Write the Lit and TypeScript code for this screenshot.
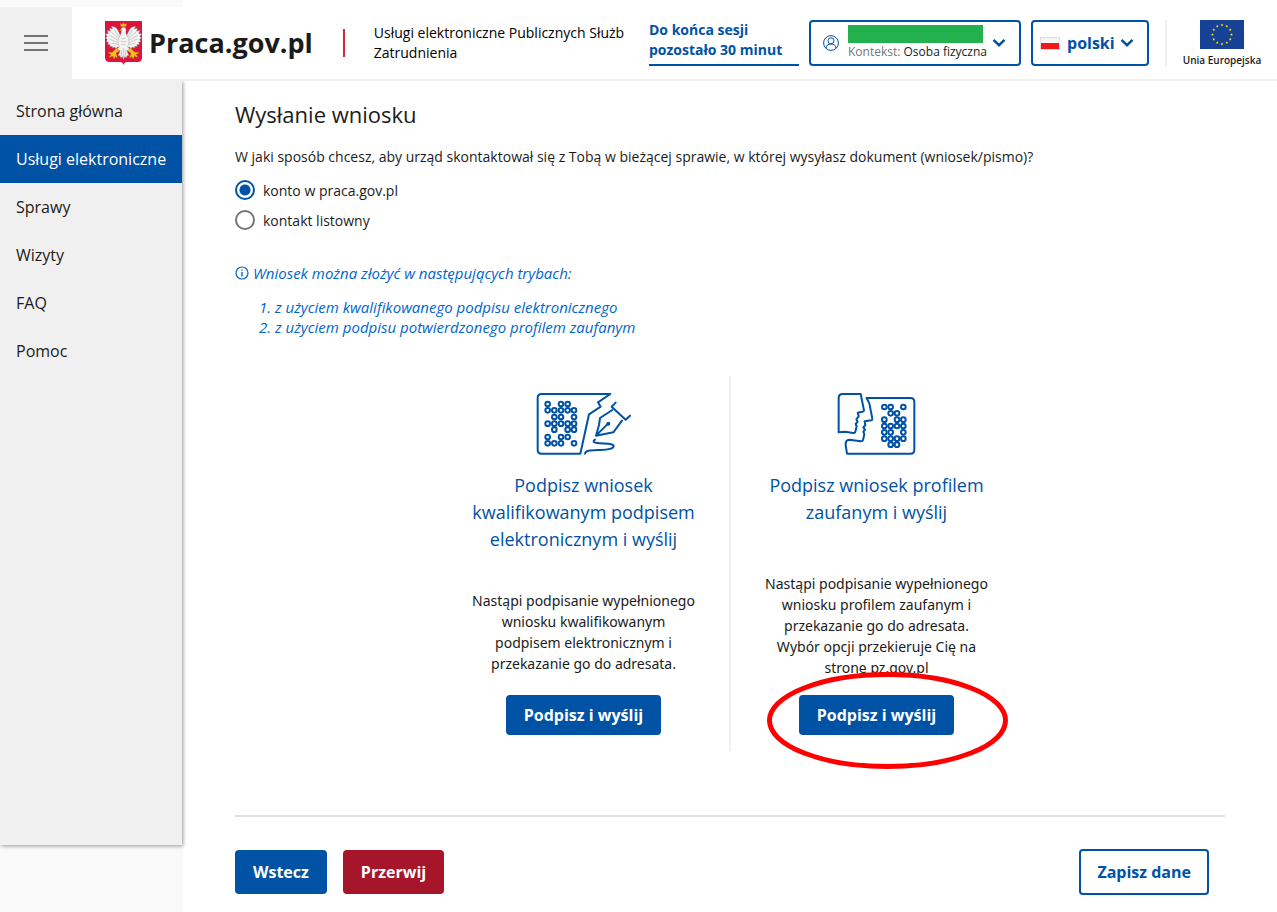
import { LitElement, html, svg, css } from "lit";
import { customElement, state } from "lit/decorators.js";

type Dot = [number, number[]];

const penDots: Dot[] = [
  [72, [68, 108, 128]],
  [91, [68, 88, 108, 128, 147]],
  [111, [88, 108, 147]],
  [131, [68, 88, 108, 128, 147]],
  [149, [88, 128, 147]],
  [171, [68, 108, 128]],
  [190, [68, 88, 108, 147]],
];

const profileDots: Dot[] = [
  [81, [178, 197, 235]],
  [100, [197, 216]],
  [119, [178, 216, 235]],
  [138, [178, 197, 216, 235]],
  [157, [178, 197, 235]],
  [176, [178, 197, 216, 235]],
  [194, [197, 216]],
];

const dots = (rows: Dot[]) =>
  rows.map(([y, xs]) => xs.map((x) => svg`<circle cx=${x} cy=${y} r="7"></circle>`));

const chevron = html`<svg class="chevron" viewBox="0 0 14 10" aria-hidden="true">
  <path d="M1.5 1.8 7 7.2l5.500-5.400" fill="none" stroke="currentColor" stroke-width="2.400"></path>
</svg>`;

const starPoints = (cx: number, cy: number, r: number) =>
  Array.from({ length: 10 }, (_, i) => {
    const a = (Math.PI / 5) * i - Math.PI / 2;
    const d = i % 2 ? r * 0.4 : r;
    return `${(cx + d * Math.cos(a)).toFixed(2)},${(cy + d * Math.sin(a)).toFixed(2)}`;
  }).join(" ");

const euStars = Array.from({ length: 12 }, (_, i) => {
  const a = (Math.PI / 6) * i;
  return svg`<polygon points=${starPoints(22 + 9.5 * Math.cos(a), 14.5 + 9.5 * Math.sin(a), 1.6)}></polygon>`;
});

const eagle = html`<svg class="eagle" viewBox="0 0 37 44" aria-hidden="true">
  <path fill="#dc143c" d="M0 0h37v36.500c0 3-2 4.500-4.500 4.500H22c-2 0-3 1-3.500 3-.5-2-1.500-3-3.500-3H4.500C2 41 0 39.500 0 36.500z"></path>
  <g fill="#f4f4f4" stroke="#8d8d8d" stroke-width=".4" stroke-linejoin="round">
    <path d="M16 16 13 9.500C11.500 6.500 9 5 6.500 5.500l1 2.500-3-.8.8 2.800-3.300-.5 1.300 3-3 .5 2 2.500-2 1.200 2.200 2-1.500 1.500 2.500 1.300-1 1.700 2.700.6-.4 1.800 2.600-.2.100 1.700 2.500-1 .5 1.600 2.300-1.600 2.200 1z"></path>
    <path d="m21 16 3-6.500c1.500-3 4-4.500 6.500-4l-1 2.500 3-.8-.8 2.800 3.300-.5-1.300 3 3 .5-2 2.500 2 1.200-2.200 2 1.500 1.500-2.500 1.300 1 1.700-2.700.6.4 1.800-2.600-.2-.1 1.700-2.500-1-.5 1.600-2.300-1.600-2.200 1z"></path>
    <path d="M16.500 7c1.500-1.500 4-1 4.500 1 .3 2-.7 3.500.5 5.500l2 4c1 3 .5 6-1 8.500l5 4-3 1-2.500-2 .5 2.500 1.500 3.500-2-.5-.7 2.500-1.500-1.500-1.300 3-1.300-3-1.500 1.500-.7-2.500-2 .5 1.500-3.500.5-2.500-2.500 2-3-1 5-4c-1.500-2.500-2-5.500-1-8.500l2-4c1-2 1-3.500.5-5z"></path>
    <path fill="none" d="M5 10l8 7M4 14l8.500 5M4.500 18l8 3.500M6.500 22l6.500 1.500M9 8l5 8M32 10l-8 7M33 14l-8.500 5M32.500 18l-8 3.500M30.500 22l-6.500 1.500M28 8l-5 8M16 17l2.500 1 2.500-1M15.500 20l3 1 3-1M16 23l2.500 1 2.500-1M18.500 27v10M16.500 29v6M20.500 29v6"></path>
  </g>
  <g fill="#f2c218" stroke="#b98a14" stroke-width=".3">
    <path d="m16 5.500-.8-3 2 1 1.100-2 1.300 2 2-1-.7 3zM16.500 8l-2 1.500 2.500.5z"></path>
    <path d="m12 27 2 2.200-3 3 1.500 4.800-2.300-1.500-1.200 2.500-1.200-3-3.800 1.500 2-3-3.200-2 4.400-.2zM25 27l-2 2.200 3 3-1.500 4.800 2.300-1.500 1.200 2.500 1.200-3 3.800 1.500-2-3 3.200-2-4.400-.2z"></path>
  </g>
</svg>`;

@customElement("app-root")
export class AppRoot extends LitElement {
  @state() private contact = "konto";

  private navItems = ["Strona główna", "Usługi elektroniczne", "Sprawy", "Wizyty", "FAQ", "Pomoc"];

  static styles = css`
    :host {
      display: block;
      box-sizing: border-box;
      min-height: 100vh;
      padding-top: 7px;
      background: linear-gradient(to right, #fafafa 183px, #fff 183px);
      font: 14px/20px "Open Sans", "Noto Sans", sans-serif;
      color: #1b1b1b;
    }
    * {
      box-sizing: border-box;
    }
    svg {
      display: block;
      flex: none;
    }
    button,
    select {
      font: inherit;
      cursor: pointer;
    }
    a {
      text-decoration: none;
      color: inherit;
    }
    .header {
      display: flex;
      align-items: center;
      height: 74px;
      padding-right: 16px;
      background: #fff;
      border-bottom: 2px solid #f0f0f0;
    }
    .burger {
      display: grid;
      place-content: center;
      gap: 5px;
      width: 72px;
      height: 72px;
      border: 0;
      background: #f0f0f0;
    }
    .burger span {
      width: 24px;
      height: 2px;
      background: #757575;
    }
    .brand {
      display: flex;
      align-items: center;
      gap: 7px;
      margin-left: 33px;
      font-size: 27px;
      line-height: 40px;
      font-weight: 700;
    }
    .eagle {
      width: 37px;
      height: 44px;
    }
    .rule {
      flex: none;
      width: 2px;
      height: 28px;
      margin: 0 29px 0 30px;
      background: #dc2340;
    }
    .tagline {
      flex: 1;
      margin: 0 20px 0 0;
      color: #000;
    }
    .session {
      flex: none;
      width: 150px;
      margin: 0 10px 0 0;
      padding-bottom: 4px;
      border-bottom: 2px solid #0052a5;
      color: #0052a5;
      font-weight: 700;
    }
    .box {
      display: flex;
      flex: none;
      align-items: center;
      height: 46px;
      margin-right: 10px;
      border: 2px solid #0052a5;
      border-radius: 4px;
      background: #fff;
      color: #0052a5;
    }
    .account {
      width: 212px;
      padding: 0 13px 0 12px;
      text-align: left;
    }
    .avatar {
      width: 16px;
      height: 16px;
      margin-right: 9px;
    }
    .who {
      flex: 1;
      font-size: 12px;
      line-height: 18px;
      color: #757575;
      white-space: nowrap;
    }
    .who b {
      font-weight: 400;
      color: #1b1b1b;
    }
    .mask {
      display: block;
      width: 135px;
      height: 18px;
      background: #22b14c;
    }
    .chevron {
      width: 14px;
      height: 10px;
    }
    .language {
      width: 118px;
      margin-right: 16px;
      padding: 0 13px 0 7px;
    }
    .flag {
      width: 20px;
      height: 13px;
      margin-right: 7px;
    }
    .language select {
      flex: 1;
      min-width: 0;
      padding: 0;
      border: 0;
      appearance: none;
      background: none;
      color: inherit;
      font-size: 16px;
      line-height: 24px;
      font-weight: 700;
    }
    .eu {
      display: flex;
      flex: none;
      flex-direction: column;
      align-items: center;
      width: 96px;
      height: 46px;
      padding-left: 16px;
      border-left: 2px solid #f0f0f0;
      font-size: 10px;
      line-height: 16px;
      font-weight: 600;
      white-space: nowrap;
    }
    .eu svg {
      width: 44px;
      height: 29px;
      margin-bottom: 3px;
    }
    .layout {
      display: grid;
      grid-template-columns: 182px minmax(0, 1fr);
      align-items: start;
    }
    .sidebar {
      min-height: calc(100vh - 148px);
      padding-top: 6px;
      background: #f0f0f0;
      box-shadow: 1px 1px 4px rgba(0, 0, 0, 0.4);
      clip-path: inset(0 -8px -8px 0);
    }
    .sidebar a {
      display: block;
      padding: 12px 0 12px 16px;
      font-size: 16px;
      line-height: 24px;
      white-space: nowrap;
    }
    .sidebar a.active {
      background: #0052a5;
      color: #fff;
    }
    .main {
      padding: 19px 52px 17px 53px;
    }
    h1 {
      margin: 0 0 19px;
      font-size: 22px;
      line-height: 28px;
      font-weight: 500;
    }
    fieldset {
      display: grid;
      gap: 8px;
      min-width: 0;
      margin: 0;
      padding: 0;
      border: 0;
    }
    legend {
      margin-bottom: 13px;
      padding: 0;
    }
    .option {
      display: flex;
      gap: 8px;
      line-height: 22px;
    }
    .option input {
      appearance: none;
      width: 20px;
      height: 20px;
      margin: 0;
      border: 2px solid #757575;
      border-radius: 50%;
    }
    .option input:checked {
      border-color: #0052a5;
      background: radial-gradient(circle, #0052a5 5px, #fff 6px);
    }
    .info {
      margin-top: 31px;
      color: #06c;
      font-size: 15px;
      font-style: italic;
    }
    .info p {
      display: flex;
      align-items: center;
      gap: 4px;
      margin: 0 0 14px;
    }
    .info svg {
      width: 14px;
      height: 14px;
    }
    .info ol {
      margin: 0;
      padding-left: 40px;
    }
    .cards {
      display: grid;
      grid-template-columns: repeat(2, 293px);
      justify-content: center;
      margin: 39px 0 64px;
      background: linear-gradient(#f0f0f0, #f0f0f0) center / 2px 100% no-repeat;
    }
    .card {
      position: relative;
      display: flex;
      flex-direction: column;
      align-items: center;
      min-height: 375px;
      padding: 16px 32px;
      text-align: center;
    }
    .art {
      height: 64px;
      fill: none;
      stroke: #0052a5;
      stroke-width: 6;
      stroke-linecap: round;
      stroke-linejoin: round;
    }
    .art.pen {
      width: 96px;
    }
    .art.profile {
      width: 80px;
    }
    h2 {
      margin: 16px 0 0;
      color: #0052a5;
      font-size: 18px;
      line-height: 27px;
      font-weight: 400;
    }
    .desc {
      max-height: 101px;
      margin: auto 0 21px;
      overflow: hidden;
      font-family: "Noto Sans", sans-serif;
      line-height: 21px;
    }
    .btn {
      height: 44px;
      padding: 0 18px;
      border: 0;
      border-radius: 4px;
      background: #0052a5;
      color: #fff;
      font-size: 16px;
      line-height: 24px;
      font-weight: 700;
    }
    .card .btn {
      height: 40px;
      flex: none;
    }
    .btn.danger {
      background: #a7152b;
    }
    .btn.outline {
      height: 46px;
      margin: 0 16px 0 auto;
      padding: 0 16px;
      border: 2px solid #0052a5;
      background: #fff;
      color: #0052a5;
    }
    .mark {
      position: absolute;
      right: 15px;
      bottom: -18px;
      width: 241px;
      height: 97px;
      pointer-events: none;
    }
    .footer {
      display: flex;
      align-items: center;
      gap: 16px;
      padding-top: 32px;
      border-top: 2px solid #dfdfdf;
    }
  `;

  private option(value: string, label: string) {
    return html`<label class="option">
      <input
        type="radio"
        name="contact"
        .checked=${this.contact === value}
        @change=${() => (this.contact = value)}
      />
      ${label}
    </label>`;
  }

  render() {
    return html`
      <header class="header">
        <button class="burger" aria-label="Menu"><span></span><span></span><span></span></button>
        <a class="brand" href="#">${eagle}Praca.gov.pl</a>
        <span class="rule"></span>
        <p class="tagline">Usługi elektroniczne Publicznych Służb Zatrudnienia</p>
        <p class="session">Do końca sesji<br />pozostało 30 minut</p>
        <button class="box account">
          <svg class="avatar" viewBox="0 0 16 16" fill="none" stroke="currentColor" aria-hidden="true">
            <circle cx="8" cy="8" r="7.400"></circle>
            <circle cx="8" cy="5.800" r="3"></circle>
            <path d="M3 13.300c.4-3 2-4.300 5-4.300s4.600 1.300 5 4.300"></path>
          </svg>
          <span class="who"><span class="mask"></span>Kontekst: <b>Osoba fizyczna</b></span>
          ${chevron}
        </button>
        <div class="box language">
          <svg class="flag" viewBox="0 0 20 13" aria-hidden="true">
            <rect x=".5" y=".5" width="19" height="12" fill="#f4f4f4" stroke="#dedede"></rect>
            <rect x="1" y="6" width="18" height="6" fill="#f01818"></rect>
          </svg>
          <select aria-label="Język"><option>polski</option></select>
          ${chevron}
        </div>
        <div class="eu">
          <svg viewBox="0 0 44 29" aria-hidden="true">
            <rect width="44" height="29" fill="#164194"></rect>
            <g fill="#ffe500">${euStars}</g>
          </svg>
          Unia Europejska
        </div>
      </header>
      <div class="layout">
        <nav class="sidebar">
          ${this.navItems.map(
            (item, i) => html`<a href="#" class=${i === 1 ? "active" : ""}>${item}</a>`
          )}
        </nav>
        <main class="main">
          <h1>Wysłanie wniosku</h1>
          <fieldset>
            <legend>
              W jaki sposób chcesz, aby urząd skontaktował się z Tobą w bieżącej sprawie, w której
              wysyłasz dokument (wniosek/pismo)?
            </legend>
            ${this.option("konto", "konto w praca.gov.pl")}
            ${this.option("list", "kontakt listowny")}
          </fieldset>
          <section class="info">
            <p>
              <svg viewBox="0 0 14 14" fill="none" stroke="currentColor" aria-hidden="true">
                <circle cx="7" cy="7" r="6" stroke-width="1.200"></circle>
                <path d="M7 6v4.500M7 3.500v1.300" stroke-width="1.400"></path>
              </svg>
              Wniosek można złożyć w następujących trybach:
            </p>
            <ol>
              <li>z użyciem kwalifikowanego podpisu elektronicznego</li>
              <li>z użyciem podpisu potwierdzonego profilem zaufanym</li>
            </ol>
          </section>
          <div class="cards">
            <section class="card">
              <svg class="art pen" viewBox="33 36 288 192" aria-hidden="true">
                <path d="M256 42H50Q38 42 38 54V209Q38 221 50 221H166L192 103L227 80L219 67Z"></path>
                <path d="M272 68L260 80L302 119L315 107"></path>
                <path d="M262 90L225 114L222 135L213 167L265 157L291 122M213 167L249 131"></path>
                <circle cx="250" cy="131" r="3"></circle>
                <path d="M210 179C203 183 205 188 213 188C235 192 268 189 266 199C264 209 240 209 222 210C195 211 182 211 180 221"></path>
                ${dots(penDots)}
              </svg>
              <h2>Podpisz wniosek kwalifikowanym podpisem elektronicznym i wyślij</h2>
              <p class="desc">
                Nastąpi podpisanie wypełnionego wniosku kwalifikowanym<br />podpisem elektronicznym i
                przekazanie go do adresata.
              </p>
              <button class="btn">Podpisz i wyślij</button>
            </section>
            <section class="card">
              <svg class="art profile" viewBox="36 36 240 192" aria-hidden="true">
                <path d="M41 157V54Q41 42 53 42H107L117 91Q117 94 113 95L98 98L101 109L94 118L98 125L92 132L95 139L91 155Q90 160 85 159L60 155L41 157"></path>
                <path d="M125 54H256Q268 54 268 66V209Q268 221 256 221H66L62 196Q61 179 73 179L108 184Q113 184 114 180L118 163L115 155L120 149L115 142L121 135L119 124L139 121Q143 120 142 116L133 70Z"></path>
                ${dots(profileDots)}
              </svg>
              <h2>Podpisz wniosek profilem zaufanym i wyślij</h2>
              <p class="desc">
                Nastąpi podpisanie wypełnionego wniosku profilem zaufanym i przekazanie go do
                adresata.<br />Wybór opcji przekieruje Cię na stronę pz.gov.pl
              </p>
              <button class="btn">Podpisz i wyślij</button>
              <svg class="mark" viewBox="0 0 241 97" aria-hidden="true">
                <ellipse cx="120.500" cy="48.500" rx="118" ry="46" fill="none" stroke="#f00" stroke-width="5"></ellipse>
              </svg>
            </section>
          </div>
          <footer class="footer">
            <button class="btn">Wstecz</button>
            <button class="btn danger">Przerwij</button>
            <button class="btn outline">Zapisz dane</button>
          </footer>
        </main>
      </div>
    `;
  }
}
